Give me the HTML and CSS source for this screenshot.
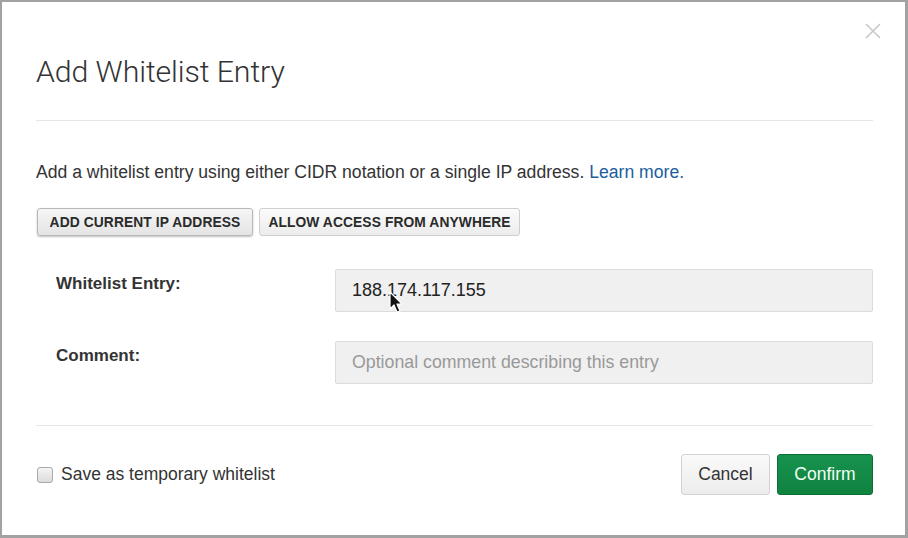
FILE: index.html
```html
<!DOCTYPE html>
<html>
<head>
<meta charset="utf-8">
<link rel="stylesheet" href="styles.css">
</head>
<body>
<div class="modal">
  <button class="close" aria-label="Close">
    <svg width="16" height="16" viewBox="0 0 16 16"><path d="M1 1L15 15M15 1L1 15" stroke="#c8c8c8" stroke-width="1.6" fill="none"/></svg>
  </button>
  <h1 class="title">Add Whitelist Entry</h1>
  <div class="rule"></div>
  <p class="desc">Add a whitelist entry using either CIDR notation or a single IP address. <a class="link" href="#">Learn more.</a></p>
  <div class="quick">
    <button class="qbtn pressed current">ADD CURRENT IP ADDRESS</button>
    <button class="qbtn anywhere">ALLOW ACCESS FROM ANYWHERE</button>
  </div>
  <div class="form">
    <div class="row">
      <label class="label">Whitelist Entry:</label>
      <div class="field">
        <div class="input">188.174.117.155</div>
        <svg class="cursor" width="16" height="24" viewBox="0 0 16 24"><path d="M1 1L1 18L5 14L8 21L11 20L8 13L13 13Z" fill="#111" stroke="#fff" stroke-width="1.2" stroke-linejoin="round"/></svg>
      </div>
    </div>
    <div class="row">
      <label class="label">Comment:</label>
      <div class="field">
        <div class="input placeholder">Optional comment describing this entry</div>
      </div>
    </div>
  </div>
  <div class="rule rule2"></div>
  <div class="footer">
    <label class="check"><span class="box"></span>Save as temporary whitelist</label>
    <div class="actions">
      <button class="btn cancel">Cancel</button>
      <button class="btn confirm">Confirm</button>
    </div>
  </div>
</div>
</body>
</html>
```

FILE: styles.css
```css
html, body {
  margin: 0;
  padding: 0;
  background: #fff;
}
body {
  font-family: "Liberation Sans", Arial, sans-serif;
  color: #333;
}
.modal {
  position: relative;
  width: 908px;
  height: 538px;
  box-sizing: border-box;
  border-style: solid;
  border-color: #a2a2a2;
  border-width: 2px 3px 3px 2px;
  padding: 0 32px 0 34px;
  background: #fff;
}
.close {
  position: absolute;
  top: 21px;
  right: 24px;
  width: 16px;
  height: 16px;
  padding: 0;
  border: 0;
  background: none;
}
.close svg { display: block; }
.title {
  margin: 0;
  padding-top: 52px;
  font-family: Roboto, "Liberation Sans", sans-serif;
  font-weight: 300;
  font-size: 30.3px;
  line-height: 36px;
  color: #333;
  letter-spacing: -0.1px;
}
.rule {
  height: 1px;
  background: #e6e6e6;
  margin-top: 30px;
}
.desc {
  margin: 41px 0 0;
  font-size: 17.6px;
  line-height: 20px;
  color: #333;
}
.link {
  color: #1b5e9e;
  text-decoration: none;
}
.quick {
  display: flex;
  gap: 6px;
  margin-top: 26px;
  padding-left: 1px;
}
.qbtn {
  height: 28px;
  padding: 0;
  font-family: "Liberation Sans", Arial, sans-serif;
  font-weight: bold;
  font-size: 13.8px;
  color: #2a2a2a;
  background: linear-gradient(#fbfbfb, #ececec);
  border: 1px solid #cfcfcf;
  border-radius: 3px;
  letter-spacing: 0.1px;
  text-align: center;
}
.qbtn.current { width: 216px; }
.qbtn.anywhere { width: 261px; }
.qbtn.pressed {
  border-color: #b8b8b8;
  box-shadow: 0 1px 2px rgba(0,0,0,0.25);
  background: linear-gradient(#f6f6f6, #e4e4e4);
}
.form {
  margin-top: 33px;
  display: flex;
  flex-direction: column;
  gap: 29px;
}
.row {
  display: flex;
  align-items: flex-start;
}
.label {
  width: 299px;
  padding-left: 20px;
  box-sizing: border-box;
  font-weight: bold;
  font-size: 17px;
  line-height: 20px;
  padding-top: 5px;
  color: #333;
}
.field {
  position: relative;
  flex: 1;
}
.input {
  height: 43px;
  box-sizing: border-box;
  background: #f0f0f0;
  border: 1px solid #dcdcdc;
  border-radius: 2px;
  padding: 0 16px;
  display: flex;
  align-items: center;
  font-size: 18px;
  color: #222;
}
.input.placeholder { color: #999; font-size: 17.75px; }
.cursor {
  position: absolute;
  left: 54px;
  top: 22px;
}
.rule2 { margin-top: 41px; }
.footer {
  display: flex;
  justify-content: space-between;
  align-items: center;
  margin-top: 28px;
}
.check {
  display: flex;
  align-items: center;
  gap: 8px;
  font-size: 17.5px;
  color: #333;
  padding-left: 1px;
}
.box {
  width: 14px;
  height: 14px;
  border: 1px solid #aaa;
  border-radius: 3px;
  background: linear-gradient(#f4f4f4, #dcdcdc);
}
.actions {
  display: flex;
  gap: 7px;
}
.btn {
  height: 41px;
  font-family: "Liberation Sans", Arial, sans-serif;
  font-size: 17.5px;
  border-radius: 3px;
  padding: 0 16px;
}
.cancel {
  width: 89px;
  background: linear-gradient(#fafafa, #ececec);
  border: 1px solid #d2d2d2;
  color: #333;
}
.confirm {
  width: 96px;
  background: linear-gradient(#17924c, #0f8340);
  border: 1px solid #0c6e35;
  color: #f2fff6;
}
```
